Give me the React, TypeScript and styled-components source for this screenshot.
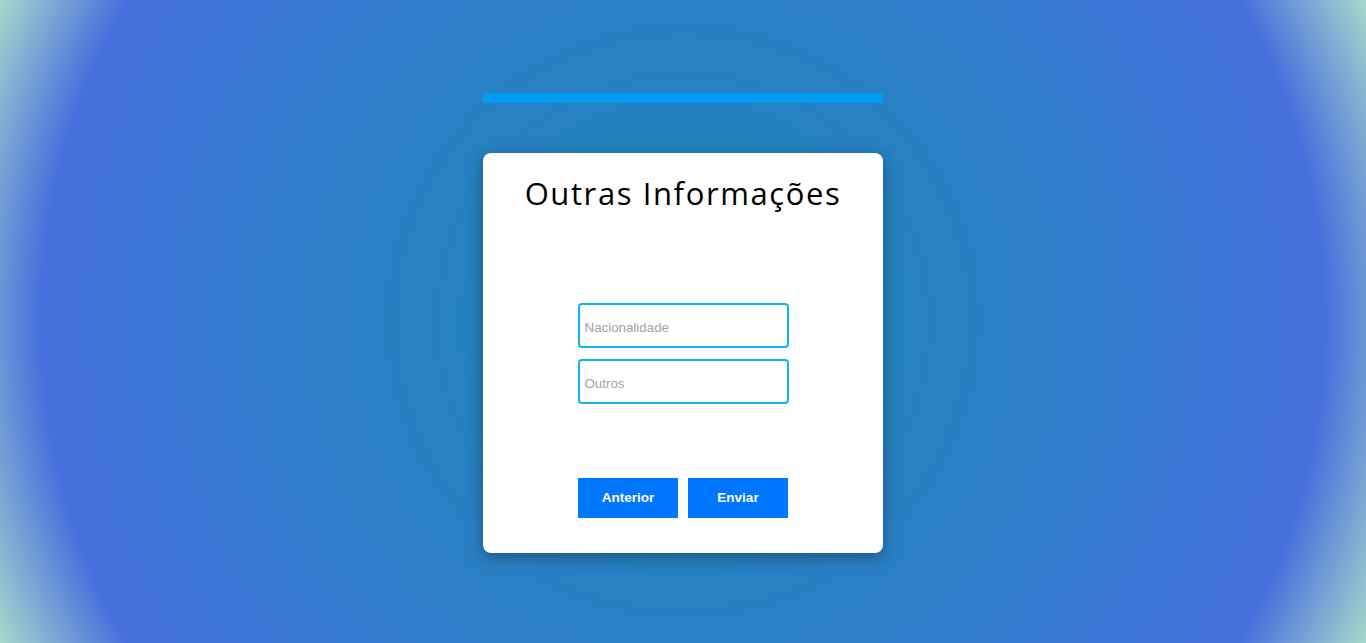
import styled, { createGlobalStyle } from "styled-components";

const GlobalStyle = createGlobalStyle`
  * {
    box-sizing: border-box;
  }

  html,
  body {
    margin: 0;
    padding: 0;
    height: 100%;
  }

  body {
    font-family: "Liberation Sans", Arial, sans-serif;
    background: radial-gradient(
      circle farthest-corner at 50% 50%,
      #1c87b4 0%,
      #2a7fc6 45%,
      #4570dc 85%,
      #a8d8cc 100%
    );
    background-attachment: fixed;
  }
`;

export default function App() {
  return (
    <>
      <GlobalStyle />
      <Page>
        <ProgressBar />
        <Card>
          <Title>Outras Informações</Title>
          <Fields>
            <Input type="text" name="nacionalidade" placeholder="Nacionalidade" />
            <Input type="text" name="outros" placeholder="Outros" />
          </Fields>
          <Actions>
            <Button type="button">Anterior</Button>
            <Button type="submit">Enviar</Button>
          </Actions>
        </Card>
      </Page>
    </>
  );
}

const Page = styled.div`
  display: flex;
  flex-direction: column;
  align-items: center;
  width: 100%;
  min-height: 643px;
  padding-top: 93px;
`;

const ProgressBar = styled.div`
  width: 400px;
  height: 10px;
  background-color: #039cf5;
`;

const Card = styled.form`
  display: flex;
  flex-direction: column;
  align-items: center;
  width: 400px;
  height: 400px;
  margin-top: 50px;
  padding: 20px 0 35px;
  background-color: #fff;
  border-radius: 8px;
  box-shadow: 0 4px 16px rgba(0, 0, 0, 0.35);
`;

const Title = styled.h2`
  margin: 0;
  font-family: "Open Sans", "Noto Sans", sans-serif;
  font-size: 31px;
  font-weight: 400;
  line-height: 40px;
  letter-spacing: 1.6px;
  color: #000;
`;

const Fields = styled.div`
  display: flex;
  flex-direction: column;
  gap: 11px;
  margin-top: 90px;
`;

const Input = styled.input`
  width: 211px;
  height: 45px;
  padding: 3px 5px 0;
  border: 2px solid #0fb4f0;
  border-radius: 4px;
  font-family: "Liberation Sans", Arial, sans-serif;
  font-size: 13.33px;
  color: #333;
  outline: none;

  &::placeholder {
    color: #a3a3a3;
  }
`;

const Actions = styled.div`
  display: flex;
  gap: 10px;
  margin-top: 74px;
`;

const Button = styled.button`
  width: 100px;
  height: 40px;
  border: none;
  padding: 0 0 1px;
  background-color: #0077ff;
  color: #fff;
  font-family: "Liberation Sans", Arial, sans-serif;
  font-size: 13.5px;
  font-weight: 700;
  cursor: pointer;
`;
